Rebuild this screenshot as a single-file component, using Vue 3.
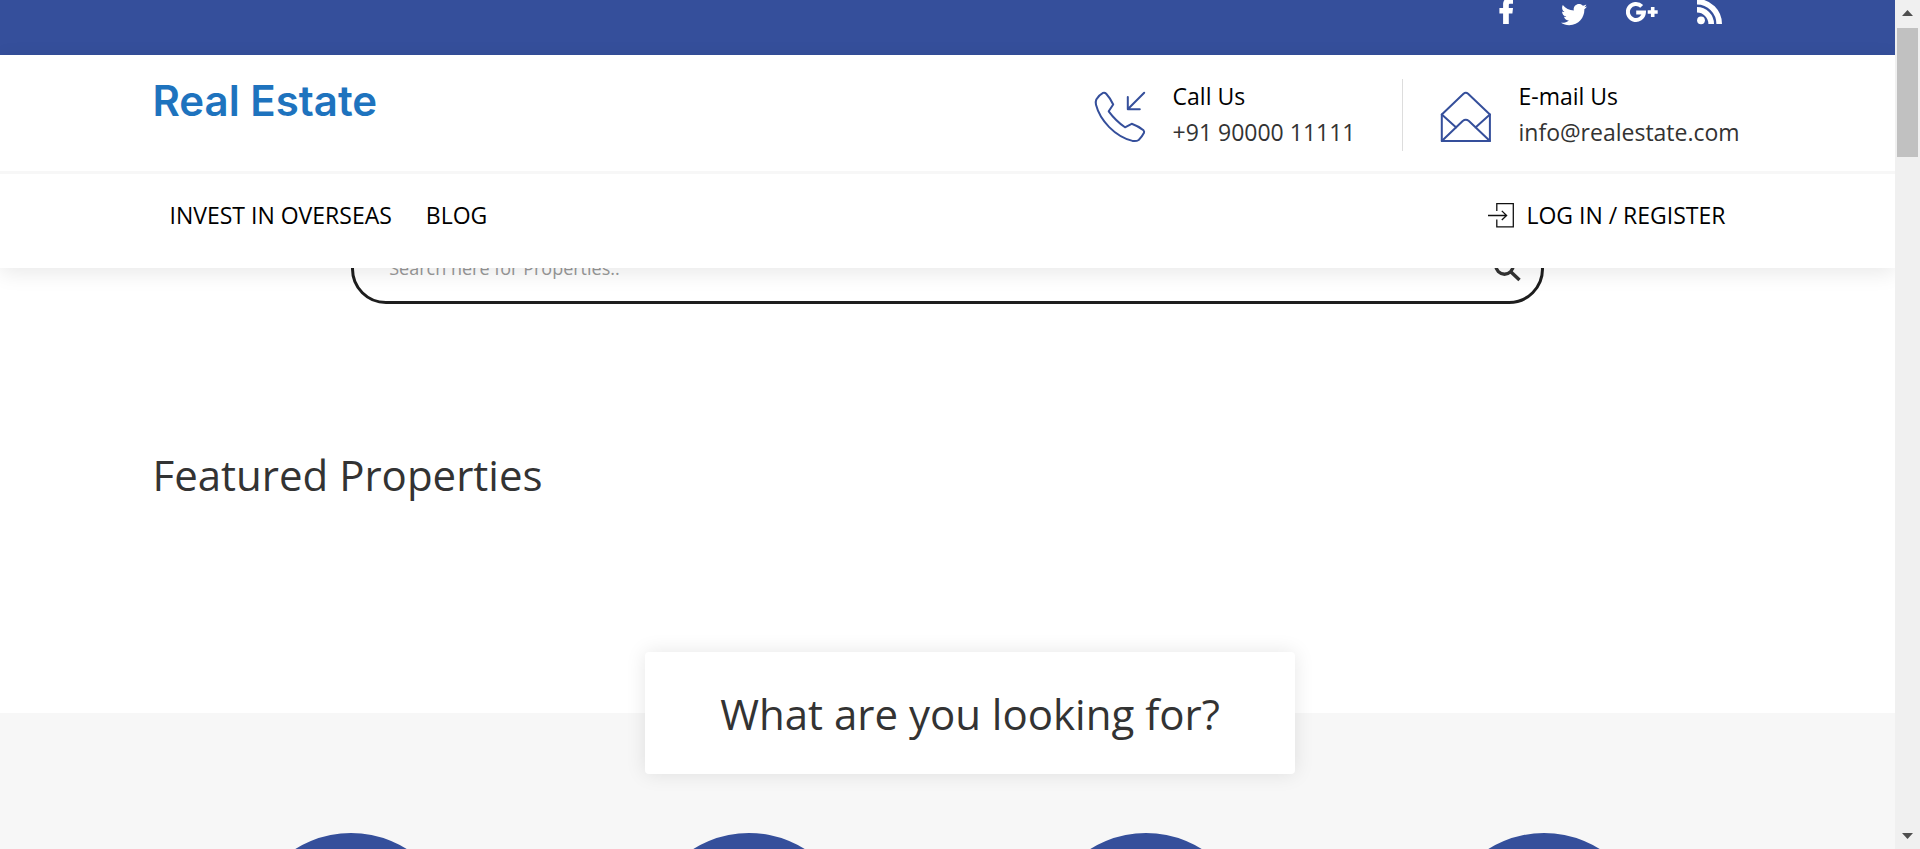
<script setup>
import { ref } from 'vue'

const query = ref('')
const navLinks = ['INVEST IN OVERSEAS', 'BLOG']
const categories = ['Category one', 'Category two', 'Category three', 'Category four']
</script>

<template>
  <div class="window">
    <div class="page">
      <div class="topbar">
        <div class="container social">
          <a href="#" aria-label="Facebook">
            <svg viewBox="0 0 32 32"><path d="M23 2v5.800h-2.600c-1.200 0-1.600.5-1.600 1.400V12H23l-.6 5.500h-3.600V28h-5.700V17.500H9.400V12h3.700V8.600C13.100 4.500 15.200 2 18.800 2z" /></svg>
          </a>
          <a href="#" aria-label="Twitter">
            <svg viewBox="0 0 32 32"><path transform="translate(3 4.750) scale(.8125)" d="M32 7.075c-1.175.525-2.444.875-3.769 1.031 1.356-.813 2.394-2.100 2.887-3.631-1.269.75-2.675 1.300-4.169 1.594-1.200-1.275-2.906-2.069-4.794-2.069-3.625 0-6.563 2.938-6.563 6.563 0 .512.056 1.012.169 1.494-5.456-.275-10.294-2.888-13.531-6.862-.563.969-.887 2.100-.887 3.300 0 2.275 1.156 4.287 2.919 5.463-1.075-.031-2.087-.331-2.975-.819v.081c0 3.181 2.263 5.838 5.269 6.437-.55.15-1.131.231-1.731.231-.425 0-.831-.044-1.237-.119.838 2.606 3.263 4.506 6.131 4.563-2.250 1.762-5.075 2.813-8.156 2.813-.531 0-1.050-.031-1.569-.094 2.913 1.869 6.362 2.950 10.069 2.950 12.075 0 18.681-10.006 18.681-18.681 0-.287-.006-.569-.019-.85 1.281-.919 2.394-2.075 3.275-3.394z" /></svg>
          </a>
          <a href="#" aria-label="Google Plus">
            <svg viewBox="0 0 32 32">
              <path class="line" d="M15.700 10.400A8 8 0 1 0 17.900 16.600H10.200" />
              <path d="M24.900 11h3.600v3.200h3.200v3.500h-3.200v3.200h-3.600v-3.200h-3.200v-3.500h3.200z" />
            </svg>
          </a>
          <a href="#" aria-label="RSS">
            <svg viewBox="0 0 32 32">
              <circle cx="7" cy="24.300" r="3.900" />
              <path class="arc" d="M3 13.800A14.200 14.200 0 0 1 17.200 28M3 5.800A22.200 22.200 0 0 1 25.200 28" />
            </svg>
          </a>
        </div>
      </div>

      <header class="header">
        <div class="brand-row">
          <div class="container brand">
            <a class="logo" href="#">Real Estate</a>
            <div class="contact">
              <svg class="contact-icon" viewBox="0 0 50 50">
                <path d="M8 .9Q9.800.3 11.200 1.800Q15.500 6.500 18.200 12.500L13.700 19.300Q20.500 28.500 30 35.300L36.700 31.800Q43 34 48.500 38.300Q49.500 39.400 49 40.800Q47 44.800 43.700 48Q41.200 49.600 37.500 48.900C20 44.500 5 28.500 1 12.800Q.4 9.400 1.300 7.500Q4 3 8 .9z" />
                <path d="M49.200.8 33 17M32.800 5v12.300h12" />
              </svg>
              <div class="contact-text">
                <span class="contact-label">Call Us</span>
                <a href="tel:+919000011111">+91 90000 11111</a>
              </div>
            </div>
            <div class="contact divided">
              <svg class="contact-icon" viewBox="0 0 50 50">
                <path d="M.8 22.500 22.500 1.800Q24.800-.2 27.100 1.800L48.900 22.500V49H.8z" />
                <path d="M.8 22.500 15.200 35.500M48.900 22.500 34.500 35.500M.8 49 21.700 29Q24.800 26.600 27.900 29L48.900 49" />
              </svg>
              <div class="contact-text">
                <span class="contact-label">E-mail Us</span>
                <a href="mailto:info@realestate.com">info@realestate.com</a>
              </div>
            </div>
          </div>
        </div>
        <nav class="container nav">
          <a v-for="link in navLinks" :key="link" href="#">{{ link }}</a>
          <a class="login" href="#">
            <svg viewBox="0 0 26 26"><path d="M8.800 9V1.700h16.500v23.200H8.800V17.500M0 13.500h18.500M13.800 8.900 18.600 13.500 13.800 18" /></svg>
            LOG IN / REGISTER
          </a>
        </nav>
      </header>

      <main>
        <section class="container">
          <form class="search" @submit.prevent>
            <input v-model="query" type="text" aria-label="Search properties" placeholder="Search here for Properties.." />
            <button type="submit" aria-label="Search">
              <svg viewBox="0 0 28 28"><circle cx="11.500" cy="11.500" r="8.700" /><path d="M17.500 17.500 26.500 26" /></svg>
            </button>
          </form>
          <h2 class="featured">Featured Properties</h2>
        </section>

        <section class="looking">
          <div class="container">
            <div class="card-row">
              <h2 class="card">What are you looking for?</h2>
            </div>
            <div class="categories">
              <a v-for="name in categories" :key="name" class="circle" href="#" :aria-label="name"></a>
            </div>
          </div>
        </section>
      </main>
    </div>

    <div class="scrollbar" aria-hidden="true">
      <svg viewBox="0 0 25 28"><path d="M12.500 10 18 16H7z" /></svg>
      <div class="thumb"></div>
      <svg class="down" viewBox="0 0 25 28"><path d="M12.500 18 18 12H7z" /></svg>
    </div>
  </div>
</template>

<style>
body {
  margin: 0;
}
</style>

<style scoped>
* {
  box-sizing: border-box;
}

.window {
  display: flex;
  height: 100vh;
  overflow: hidden;
  background: #fff;
  color: #333;
  font-family: "Open Sans", "Noto Sans", sans-serif;
  font-size: 23px;
  line-height: 36px;
}

.page {
  flex: 1;
  min-width: 0;
  overflow: hidden;
}

a {
  color: inherit;
  text-decoration: none;
}

svg {
  display: block;
}

h2 {
  margin: 0;
  font-size: 42px;
  font-weight: 400;
  line-height: 56px;
}

.container {
  width: 100%;
  max-width: 1590px;
  margin: 0 auto;
}

.topbar {
  height: 55px;
  overflow: hidden;
  background: #354f9b;
}

.social {
  display: flex;
  justify-content: flex-end;
  gap: 36px;
  margin-top: -4px;
  padding-right: 17px;
}

.social svg {
  width: 32px;
  height: 32px;
  fill: #fff;
}

.social .line,
.social .arc {
  fill: none;
  stroke: #fff;
  stroke-width: 4;
}

.social .arc {
  stroke-width: 5.6;
}

.header {
  position: relative;
  z-index: 2;
  background: #fff;
  font-weight: 500;
  box-shadow: 0 5px 20px rgba(0, 0, 0, 0.09);
}

.brand-row {
  padding: 24px 0 20px;
  border-bottom: 3px solid #f7f7f7;
}

.brand {
  display: flex;
}

.logo {
  margin-right: auto;
  color: #1e73be;
  font-family: Inter, sans-serif;
  font-size: 42px;
  font-weight: 600;
  line-height: 44px;
}

.contact {
  display: flex;
  align-items: flex-start;
  gap: 28px;
  height: 72px;
}

.divided {
  margin-left: 46px;
  padding-left: 38px;
  border-left: 1px solid #ddd;
}

.divided .contact-text {
  min-width: 224px;
}

.contact-icon {
  width: 50px;
  height: 50px;
  margin-top: 13px;
  overflow: visible;
  fill: none;
  stroke: #354f9b;
  stroke-width: 2;
  stroke-linejoin: round;
  stroke-linecap: round;
}

.contact-text {
  display: flex;
  flex-direction: column;
  margin-top: -1px;
}

.contact-label,
.nav {
  color: #000;
}

.nav {
  display: flex;
  gap: 34px;
  padding: 23px 17px 35px;
}

.login {
  display: flex;
  align-items: center;
  gap: 12px;
  margin-left: auto;
}

.login svg {
  width: 26px;
  height: 26px;
  fill: none;
  stroke: #111;
  stroke-width: 1.3;
}

.search {
  display: flex;
  align-items: center;
  width: 75%;
  height: 70px;
  margin: -34px auto 0;
  padding: 0 20px 2px 35px;
  border: 3px solid #1e1e1e;
  border-radius: 35px;
}

.search input {
  flex: 1;
  min-width: 0;
  padding: 0;
  border: 0;
  outline: 0;
  background: transparent;
  color: #333;
  font-family: inherit;
  font-size: 18px;
  font-weight: 400;
  line-height: 24px;
}

.search input::placeholder {
  color: #999;
}

.search button {
  padding: 0;
  border: 0;
  background: transparent;
}

.search svg {
  width: 28px;
  height: 28px;
  fill: none;
  stroke: #333;
  stroke-width: 3.4;
}

.featured {
  margin: 143px 0 210px;
}

.looking {
  background: #f7f7f7;
}

.card-row {
  display: flex;
  justify-content: center;
  padding-left: 45px;
}

.card {
  width: 650px;
  margin-top: -61px;
  padding: 34px 20px 32px;
  border-radius: 4px;
  background: #fff;
  box-shadow: 0 0 20px rgba(0, 0, 0, 0.1);
  text-align: center;
}

.categories {
  display: grid;
  grid-template-columns: repeat(4, 1fr);
  justify-items: center;
  padding: 59px 0;
}

.circle {
  width: 210px;
  height: 210px;
  border-radius: 50%;
  background: #354f9b;
}

.scrollbar {
  display: flex;
  flex: none;
  flex-direction: column;
  width: 25px;
  background: #f0f0f0;
}

.scrollbar svg {
  width: 25px;
  height: 28px;
  fill: #4f4f4f;
}

.scrollbar .down {
  margin-top: auto;
}

.thumb {
  height: 129px;
  margin: 0 2px;
  background: #c1c1c1;
}
</style>
